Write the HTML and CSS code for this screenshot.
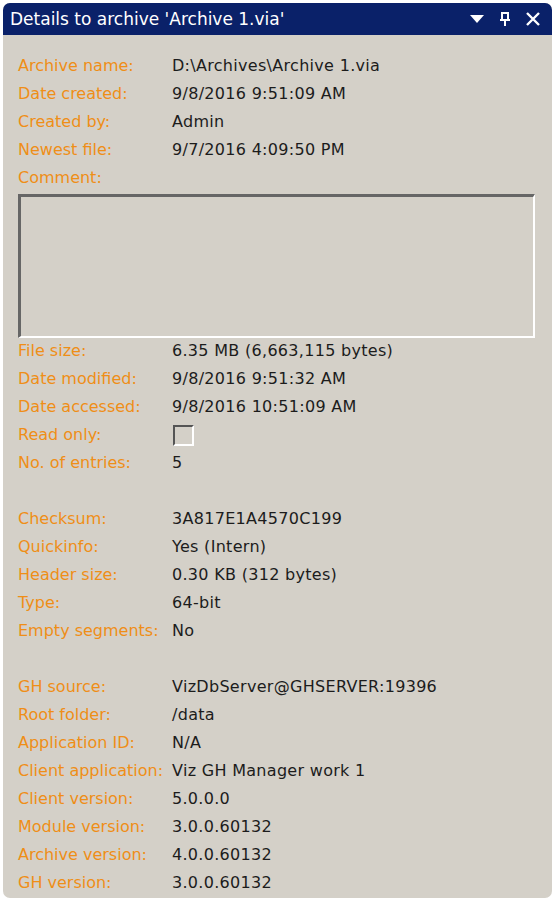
FILE: index.html
```html
<!DOCTYPE html>
<html lang="en">
<head>
    <meta charset="UTF-8">
    <title>Archive details</title>
    <link rel="stylesheet" href="styles.css">
</head>
<body>
    <div class="panel">
        <div class="title-bar">
            <span class="title">Details to archive 'Archive 1.via'</span>
            <div class="title-tools">
                <svg width="16" height="12" viewBox="0 0 16 12"><path d="M1 2 H15 L8 10 Z" fill="#fff"/></svg>
                <svg width="14" height="16" viewBox="0 0 14 16"><path d="M3 2 H11 M4 2 V9 M10 2 V9 M2 9 H12 M7 9 V15" stroke="#fff" stroke-width="2" fill="none"/></svg>
                <svg width="16" height="16" viewBox="0 0 16 16"><path d="M2 2 L14 14 M14 2 L2 14" stroke="#fff" stroke-width="2.4"/></svg>
            </div>
        </div>

        <div class="details">
            <div class="row"><span class="label">Archive name:</span><span class="value">D:\Archives\Archive 1.via</span></div>
            <div class="row"><span class="label">Date created:</span><span class="value">9/8/2016 9:51:09 AM</span></div>
            <div class="row"><span class="label">Created by:</span><span class="value">Admin</span></div>
            <div class="row"><span class="label">Newest file:</span><span class="value">9/7/2016 4:09:50 PM</span></div>
            <div class="row"><span class="label">Comment:</span></div>
            <div class="comment-box"></div>
            <div class="row"><span class="label">File size:</span><span class="value">6.35 MB (6,663,115 bytes)</span></div>
            <div class="row"><span class="label">Date modified:</span><span class="value">9/8/2016 9:51:32 AM</span></div>
            <div class="row"><span class="label">Date accessed:</span><span class="value">9/8/2016 10:51:09 AM</span></div>
            <div class="row"><span class="label">Read only:</span><span class="value"><span class="checkbox"></span></span></div>
            <div class="row"><span class="label">No. of entries:</span><span class="value">5</span></div>
            <div class="row spacer"></div>
            <div class="row"><span class="label">Checksum:</span><span class="value">3A817E1A4570C199</span></div>
            <div class="row"><span class="label">Quickinfo:</span><span class="value">Yes (Intern)</span></div>
            <div class="row"><span class="label">Header size:</span><span class="value">0.30 KB (312 bytes)</span></div>
            <div class="row"><span class="label">Type:</span><span class="value">64-bit</span></div>
            <div class="row"><span class="label">Empty segments:</span><span class="value">No</span></div>
            <div class="row spacer"></div>
            <div class="row"><span class="label">GH source:</span><span class="value">VizDbServer@GHSERVER:19396</span></div>
            <div class="row"><span class="label">Root folder:</span><span class="value">/data</span></div>
            <div class="row"><span class="label">Application ID:</span><span class="value">N/A</span></div>
            <div class="row"><span class="label">Client application:</span><span class="value">Viz GH Manager work 1</span></div>
            <div class="row"><span class="label">Client version:</span><span class="value">5.0.0.0</span></div>
            <div class="row"><span class="label">Module version:</span><span class="value">3.0.0.60132</span></div>
            <div class="row"><span class="label">Archive version:</span><span class="value">4.0.0.60132</span></div>
            <div class="row"><span class="label">GH version:</span><span class="value">3.0.0.60132</span></div>
        </div>
    </div>
</body>
</html>
```

FILE: styles.css
```css
* {
    margin: 0;
    padding: 0;
    box-sizing: border-box;
}
body {
    background: #fff;
    font-family: "DejaVu Sans", sans-serif;
    padding: 3px;
}
.panel {
    width: 549px;
    height: 895px;
    background: #d4d0c8;
    border-radius: 7px;
    overflow: hidden;
}
.title-bar {
    height: 32px;
    background: #0a2169;
    color: #fff;
    display: flex;
    align-items: center;
    justify-content: space-between;
    padding: 0 11px 0 7px;
}
.title {
    font-size: 17px;
}
.title-tools {
    display: flex;
    align-items: center;
    gap: 13px;
}
.details {
    padding: 17px 0 0 15px;
}
.row {
    display: flex;
    height: 28px;
    line-height: 28px;
    font-size: 16px;
}
.label {
    width: 154px;
    flex-shrink: 0;
    color: #ef8e17;
    white-space: nowrap;
}
.value {
    color: #1c1c1c;
    display: flex;
    align-items: center;
    letter-spacing: 0.3px;
    white-space: nowrap;
}
.comment-box {
    width: 517px;
    height: 144px;
    margin: 2px 0 -1px 0;
    border-top: 3px solid #666;
    border-left: 3px solid #666;
    border-right: 2px solid #fff;
    border-bottom: 2px solid #fff;
}
.checkbox {
    width: 21px;
    height: 21px;
    border-top: 2px solid #555;
    border-left: 2px solid #555;
    border-right: 2px solid #fff;
    border-bottom: 2px solid #fff;
    margin-left: 1px;
}
```
